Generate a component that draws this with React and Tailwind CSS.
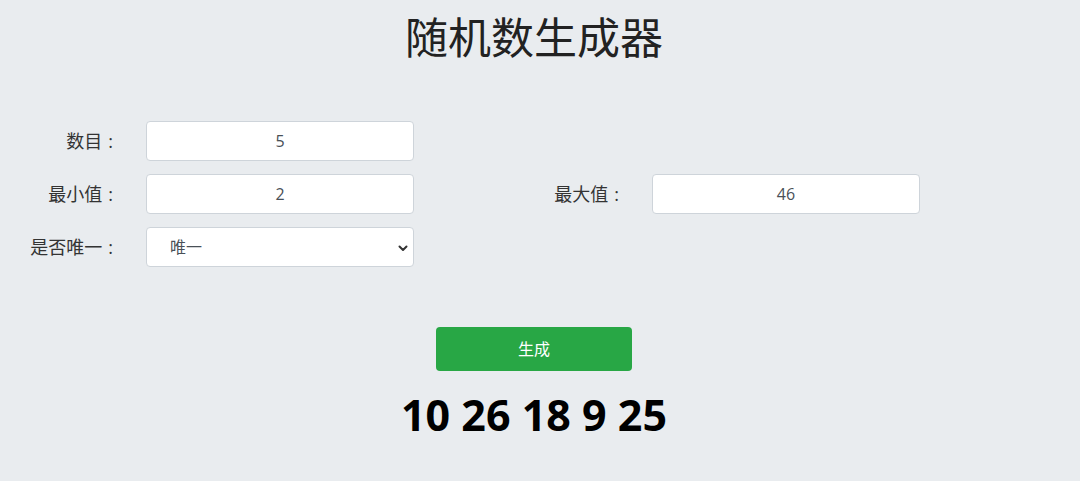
import React from "react";

const font = "font-['Open_Sans','Noto_Sans_CJK_SC',sans-serif]";

function Label({ text }) {
  return (
    <label className="w-[113px] text-right text-[18px] text-[#333] whitespace-nowrap">
      {text}
      <span className="ml-[6px]">:</span>
    </label>
  );
}

function Field({ label, value }) {
  return (
    <div className="flex items-center gap-[33px]">
      <Label text={label} />
      <input
        readOnly
        value={value}
        className="w-[268px] h-[40px] bg-white border border-[#ced4da] rounded-[4px] text-center text-[16px] text-[#495057] outline-none"
      />
    </div>
  );
}

export default function App() {
  return (
    <div className={`min-h-[481px] bg-[#e9ecef] ${font}`}>
      <div className="w-[1068px]">
        <h1 className="text-center text-[43px] text-[#222] leading-none pt-[16px] font-normal">随机数生成器</h1>

        {/* form rows */}
        <div className="mt-[62px] grid grid-cols-[506px_506px] gap-y-[13px]">
          <Field label="数目" value="5" />
          <div />
          <Field label="最小值" value="2" />
          <Field label="最大值" value="46" />
          <div className="flex items-center gap-[33px]">
            <Label text="是否唯一" />
            <div className="relative w-[268px] h-[40px] bg-white border border-[#ced4da] rounded-[4px] flex items-center">
              <span className="pl-[23px] text-[16px] text-[#495057]">唯一</span>
              <svg className="absolute right-[4px] top-[14px]" width="12" height="12" viewBox="0 0 12 12">
                <path d="M2.5 4.5 L6 8 L9.5 4.5" fill="none" stroke="#333" strokeWidth="2" strokeLinecap="round" strokeLinejoin="round" />
              </svg>
            </div>
          </div>
          <div />
        </div>

        {/* action */}
        <div className="flex flex-col items-center mt-[60px]">
          <button className="w-[196px] h-[44px] bg-[#28a745] rounded-[4px] text-white text-[16px]">生成</button>
          <div className="mt-[22px] text-[43px] font-bold text-black leading-none">10 26 18 9 25</div>
        </div>
      </div>
    </div>
  );
}
